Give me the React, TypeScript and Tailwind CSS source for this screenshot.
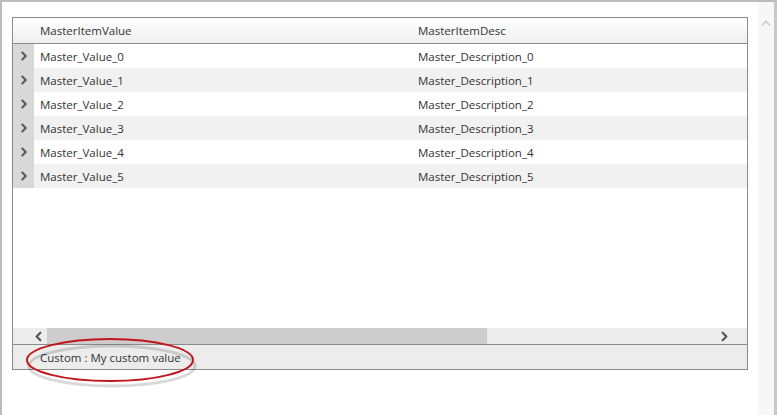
import { ChevronRight, ChevronLeft, ChevronUp } from 'lucide-react';

const rows = [0, 1, 2, 3, 4, 5].map((i) => ({
  value: `Master_Value_${i}`,
  desc: `Master_Description_${i}`,
}));

const App = () => {
  return (
    <div
      className="w-[777px] h-[415px] bg-white flex border-t-2 border-l-2 border-[#bcbcbc] overflow-hidden relative text-[11.5px] text-[#333]"
      style={{ fontFamily: '"Open Sans", "Noto Sans", sans-serif' }}
    >
      <div className="flex-1 pl-[10px] pt-[15px] pr-[10px]">
        {/* grid */}
        <div className="w-[736px] h-[353px] border border-[#8a8a8a] flex flex-col">
          <div className="h-[26px] flex items-center pt-[1px] border-b border-[#8a8a8a] bg-gradient-to-b from-white to-[#efefef]">
            <div className="w-[21px]" />
            <div className="w-[384px] pl-[6px]">MasterItemValue</div>
            <div className="flex-1">MasterItemDesc</div>
          </div>
          <div className="flex-1 flex flex-col">
            {rows.map((r, i) => (
              <div key={i} className={`h-[24px] flex items-center ${i % 2 ? 'bg-[#f1f1f1]' : 'bg-white'}`}>
                <div className="w-[21px] h-full bg-[#d8d8d8] flex items-center justify-center">
                  <ChevronRight size={14} strokeWidth={3.5} className="text-[#5a5a5a]" />
                </div>
                <div className="w-[384px] pl-[6px] pt-[2px]">{r.value}</div>
                <div className="flex-1 pt-[2px]">{r.desc}</div>
              </div>
            ))}
          </div>
          <div className="h-[17px] bg-[#ececec] flex items-center border-b border-[#8a8a8a]">
            <div className="w-[34px] flex justify-end pr-[1px]">
              <ChevronLeft size={15} strokeWidth={3.5} className="text-[#555]" />
            </div>
            <div className="w-[440px] h-[16px] bg-[#cdcdcd]" />
            <div className="flex-1" />
            <div className="w-[30px] flex justify-start">
              <ChevronRight size={15} strokeWidth={3.5} className="text-[#555]" />
            </div>
          </div>
          <div className="h-[24px] bg-[#ececec] flex items-center pl-[27px] pt-[1px]">Custom : My custom value</div>
        </div>
      </div>
      <div className="w-[16px] h-full bg-[#f7f7f7] border-r-[3px] border-[#c8c8c8] box-content flex justify-center pt-[14px]">
        <ChevronUp size={14} strokeWidth={2.5} className="text-[#c8c8c8]" />
      </div>
      {/* annotation */}
      <svg className="absolute left-[20px] top-[334px]" width="180" height="52" viewBox="0 0 180 52">
        <ellipse cx="88" cy="27" rx="83" ry="20" fill="none" stroke="#000" strokeOpacity="0.15" strokeWidth="3" transform="translate(2,3)" />
        <ellipse cx="88" cy="24" rx="83" ry="21" fill="none" stroke="#c0151b" strokeWidth="2" />
      </svg>
    </div>
  );
};

export default App;
